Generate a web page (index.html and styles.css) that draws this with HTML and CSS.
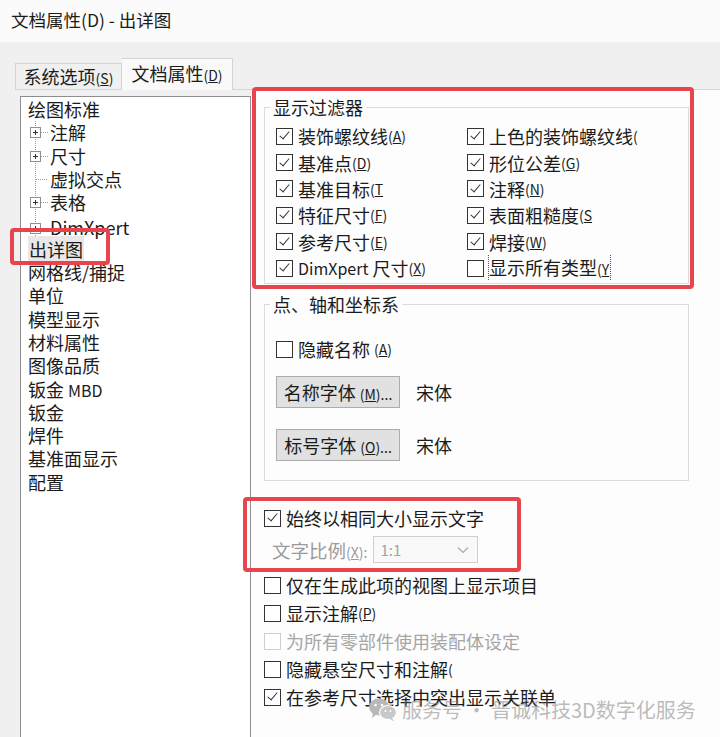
FILE: index.html
```html
<!DOCTYPE html>
<html lang="zh-CN">
<head>
  <meta charset="UTF-8" />
  <meta name="viewport" content="width=device-width, initial-scale=1.0"/>
  <title>文档属性(D) - 出详图</title>
  <link rel="stylesheet" href="styles.css">
</head>
<body>
  <div class="titlebar">文档属性(D) - 出详图</div>

  <div class="tabs">
    <div class="tab">系统选项<span class="key">(<u>S</u>)</span></div>
    <div class="tab active">文档属性<span class="key">(<u>D</u>)</span></div>
  </div>

  <div class="sheet">
    <div class="tree">
      <div class="node">绘图标准</div>
      <div class="kids">
        <div class="child"><i class="plus"></i><i class="dash"></i>注解</div>
        <div class="child"><i class="plus"></i><i class="dash"></i>尺寸</div>
        <div class="child"><i class="dash long"></i>虚拟交点</div>
        <div class="child"><i class="plus"></i><i class="dash"></i>表格</div>
        <div class="child low"><i class="plus"></i><i class="dash"></i>DimXpert</div>
      </div>
      <div class="node"><span class="selected">出详图</span></div>
      <div class="node">网格线/捕捉</div>
      <div class="node">单位</div>
      <div class="node">模型显示</div>
      <div class="node">材料属性</div>
      <div class="node">图像品质</div>
      <div class="node">钣金 <span class="latin">MBD</span></div>
      <div class="node">钣金</div>
      <div class="node">焊件</div>
      <div class="node">基准面显示</div>
      <div class="node">配置</div>
    </div>

    <div class="page">
      <fieldset class="group filter">
        <legend>显示过滤器</legend>
        <div class="grid">
          <label class="cb on"><i class="box"></i>装饰螺纹线<span class="key">(<u>A</u>)</span></label>
          <label class="cb on"><i class="box"></i>上色的装饰螺纹线<span class="key">(</span></label>
          <label class="cb on"><i class="box"></i>基准点<span class="key">(<u>D</u>)</span></label>
          <label class="cb on"><i class="box"></i>形位公差<span class="key">(<u>G</u>)</span></label>
          <label class="cb on"><i class="box"></i>基准目标<span class="key">(<u>T</u></span></label>
          <label class="cb on"><i class="box"></i>注释<span class="key">(<u>N</u>)</span></label>
          <label class="cb on"><i class="box"></i>特征尺寸<span class="key">(<u>F</u>)</span></label>
          <label class="cb on"><i class="box"></i>表面粗糙度<span class="key">(<u>S</u></span></label>
          <label class="cb on"><i class="box"></i>参考尺寸<span class="key">(<u>E</u>)</span></label>
          <label class="cb on"><i class="box"></i>焊接<span class="key">(<u>W</u>)</span></label>
          <label class="cb on"><i class="box"></i><span class="latin">DimXpert</span>&nbsp;尺寸<span class="key">(<u>X</u>)</span></label>
          <label class="cb"><i class="box"></i><span class="focus">显示所有类型<span class="key">(<u>Y</u></span></span></label>
        </div>
      </fieldset>

      <fieldset class="group axes">
        <legend>点、轴和坐标系</legend>
        <label class="cb"><i class="box"></i>隐藏名称&nbsp;<span class="key">(<u>A</u>)</span></label>
        <div class="font-row">
          <button class="btn">名称字体 <span class="key">(<u>M</u>)...</span></button>
          <span>宋体</span>
        </div>
        <div class="font-row second">
          <button class="btn">标号字体 <span class="key">(<u>O</u>)...</span></button>
          <span>宋体</span>
        </div>
      </fieldset>

      <label class="cb on row first"><i class="box"></i>始终以相同大小显示文字</label>
      <div class="scale">
        <span class="muted">文字比例<span class="key">(<u>X</u>):</span></span>
        <div class="select">
          <span>1:1</span>
          <svg width="12" height="8" viewBox="0 0 12 8"><polyline points="1,1.5 6,6.5 11,1.5" fill="none" stroke="#a8a8a8" stroke-width="1.2"/></svg>
        </div>
      </div>
      <div class="list">
        <label class="cb row"><i class="box"></i>仅在生成此项的视图上显示项目</label>
        <label class="cb row"><i class="box"></i>显示注解<span class="key">(<u>P</u>)</span></label>
        <label class="cb row disabled"><i class="box"></i>为所有零部件使用装配体设定</label>
        <label class="cb row"><i class="box"></i>隐藏悬空尺寸和注解<span class="key">(</span></label>
        <label class="cb on row"><i class="box"></i><span class="cut">在参考尺寸选择中突出显示关联单</span></label>
      </div>
    </div>
  </div>

  <!-- annotation frames drawn over the screenshot -->
  <div class="mark mark-tree"></div>
  <div class="mark mark-filter"></div>
  <div class="mark mark-text"></div>

  <div class="watermark">
    <svg width="30" height="26" viewBox="0 0 30 26">
      <ellipse cx="11" cy="10" rx="10" ry="8.5" fill="#b8b8b8"/>
      <path d="M5 16 L4 21 L9 17 Z" fill="#b8b8b8"/>
      <ellipse cx="20" cy="15.5" rx="8.5" ry="7" fill="#c8c8c8" stroke="#fff" stroke-width="1.2"/>
      <path d="M24 20.5 L26 24.5 L21 21.5 Z" fill="#c8c8c8"/>
      <circle cx="7.5" cy="8" r="1.3" fill="#fff"/>
      <circle cx="14" cy="8" r="1.3" fill="#fff"/>
      <circle cx="17.5" cy="14" r="1" fill="#fff"/>
      <circle cx="22.5" cy="14" r="1" fill="#fff"/>
    </svg>
    <span>服务号 · 晋诚科技3D数字化服务</span>
  </div>
</body>
</html>
```

FILE: styles.css
```css
body {
  margin: 0;
  width: 720px;
  height: 737px;
  overflow: hidden;
  background: #f0f0f0;
  font-family: "Noto Sans CJK SC", "Noto Sans", sans-serif;
  font-size: 18px;
  color: #1b1b1b;
  position: relative;
}

.key {
  font-size: 14px;
}

.latin {
  font-size: 16px;
}

/* title + tabs */
.titlebar {
  height: 42px;
  line-height: 40px;
  padding-left: 11px;
  font-size: 17.5px;
  background: #fbfbfb;
}

.tabs {
  display: flex;
  align-items: flex-end;
  height: 47px;
  padding-left: 15px;
}

.tab {
  width: 105px;
  height: 25px;
  line-height: 25px;
  text-align: center;
  border: 1px solid #d4d4d4;
  border-bottom: none;
  background: #f0f0f0;
  box-sizing: content-box;
}

.tab.active {
  width: 110px;
  height: 31px;
  line-height: 28px;
  margin-bottom: -1px;
  border-left: none;
  background: #f9f9f9;
  position: relative;
}

/* sheet */
.sheet {
  display: flex;
  height: 647px;
  margin-left: 15px;
  border-top: 1px solid #d4d4d4;
}

.tree {
  width: 229px;
  margin: 6px 0 0 5px;
  padding-top: 1px;
  border: 1px solid #8e8e8e;
  border-bottom: none;
  background: #fff;
  line-height: 23.3px;
}

.node {
  height: 23.3px;
  padding-left: 7px;
  white-space: nowrap;
}

.selected {
  background: #e8e8e8;
  padding: 0 1px;
}

.kids {
  margin-left: 14px;
  border-left: 1px dotted #9a9a9a;
}

.child {
  display: flex;
  align-items: center;
  height: 23.3px;
}

.child.low {
  padding-top: 4px;
  box-sizing: border-box;
}

.plus {
  width: 9px;
  height: 9px;
  margin-left: -6px;
  border: 1px solid #8f8f8f;
  background: #fff;
  position: relative;
}

.plus::before,
.plus::after {
  content: "";
  position: absolute;
  background: #333;
}

.plus::before {
  left: 2px;
  top: 4px;
  width: 5px;
  height: 1px;
}

.plus::after {
  left: 4px;
  top: 2px;
  width: 1px;
  height: 5px;
}

.dash {
  width: 7px;
  margin-right: 2px;
  border-top: 1px dotted #9a9a9a;
}

.dash.long {
  width: 11px;
  margin-right: 3px;
}

.page {
  flex: 1;
  background: #fdfdfd;
  padding: 5px 0 0 13px;
}

/* groups */
.group {
  width: 401px;
  margin: 0;
  padding: 4px 11px 2px;
  border: 1px solid #dcdcdc;
}

.group legend {
  padding: 0 3px;
  margin-left: -6px;
  line-height: 24px;
}

.grid {
  display: grid;
  grid-template-columns: 191px 1fr;
  grid-auto-rows: 26.4px;
}

.axes {
  margin-top: 8px;
  padding-top: 20px;
  padding-bottom: 19px;
}

.cb {
  display: flex;
  align-items: center;
  white-space: nowrap;
  overflow: hidden;
  line-height: 24px;
}

.box {
  flex: none;
  width: 15px;
  height: 15px;
  margin-right: 5px;
  border: 1px solid #333;
  background: #fff;
  position: relative;
}

.cb.on .box::after {
  content: "";
  position: absolute;
  left: 4.5px;
  top: 0.5px;
  width: 4px;
  height: 9px;
  border-right: 1.4px solid #333;
  border-bottom: 1.4px solid #333;
  transform: rotate(40deg);
}

.focus {
  outline: 1px dotted #555;
  outline-offset: 0;
  padding-right: 1px;
}

.axes .cb {
  height: 26px;
}

.font-row {
  display: flex;
  align-items: center;
  gap: 16px;
  margin-top: 14px;
}

.font-row.second {
  margin-top: 21px;
}

.btn {
  width: 124px;
  height: 32px;
  padding: 0;
  font-family: inherit;
  font-size: 18px;
  color: #1b1b1b;
  background: #e1e1e1;
  border: 1px solid #adadad;
}

.row {
  height: 28px;
}

.row.first {
  margin-top: 24px;
  height: 26px;
}

.scale {
  display: flex;
  align-items: center;
  gap: 6px;
  margin: 5px 0 8px 8px;
}

.muted {
  color: #9b9b9b;
  font-size: 18.5px;
}

.select {
  display: flex;
  align-items: center;
  justify-content: space-between;
  width: 89px;
  height: 25px;
  padding: 0 8px 0 6px;
  border: 1px solid #cfcfcf;
  background: #f9f9f9;
  color: #a3a3a3;
  font-size: 15px;
}

.disabled {
  color: #a6a6a6;
}

.disabled .box {
  border-color: #cfcfcf;
}

.cut {
  display: inline-block;
  width: 272px;
  overflow: hidden;
}

/* red annotation frames */
.mark {
  position: absolute;
  border: 4px solid #e9444c;
  border-radius: 4px;
}

.mark-tree {
  left: 10px;
  top: 228px;
  width: 92px;
  height: 29px;
}

.mark-filter {
  left: 252px;
  top: 87px;
  width: 434px;
  height: 194px;
}

.mark-text {
  left: 243px;
  top: 497px;
  width: 270px;
  height: 67px;
}

.watermark {
  position: absolute;
  left: 368px;
  top: 695px;
  display: flex;
  align-items: center;
  gap: 4px;
  font-size: 20px;
  color: rgba(130, 130, 130, 0.55);
  white-space: nowrap;
}
```
